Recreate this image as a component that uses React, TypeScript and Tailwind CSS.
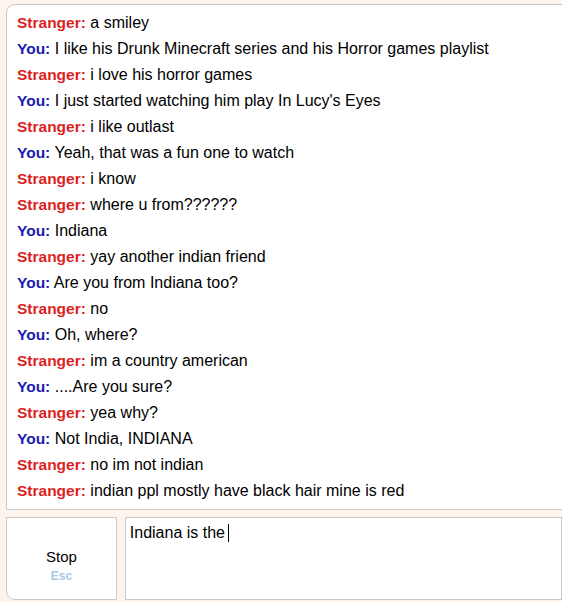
const lines: [boolean, string][] = [
  [false, 'a smiley'],
  [true, 'I like his Drunk Minecraft series and his Horror games playlist'],
  [false, 'i love his horror games'],
  [true, "I just started watching him play In Lucy's Eyes"],
  [false, 'i like outlast'],
  [true, 'Yeah, that was a fun one to watch'],
  [false, 'i know'],
  [false, 'where u from??????'],
  [true, 'Indiana'],
  [false, 'yay another indian friend'],
  [true, 'Are you from Indiana too?'],
  [false, 'no'],
  [true, 'Oh, where?'],
  [false, 'im a country american'],
  [true, '....Are you sure?'],
  [false, 'yea why?'],
  [true, 'Not India, INDIANA'],
  [false, 'no im not indian'],
  [false, 'indian ppl mostly have black hair mine is red'],
];

export default function App() {
  return (
    <div className="w-[562px] h-[602px] overflow-hidden bg-[#fdf4ee] pl-[6px] pt-[4px] font-['Liberation_Sans',Arial,sans-serif] text-[16px] text-black">
      <div className="w-[570px] h-[506px] bg-white border border-[#ccc9c4] rounded-tl-[9px] pl-[10px] pt-[5px]">
        {lines.map(([you, text], i) => (
          <div key={i} className="leading-[26px] whitespace-nowrap">
            <span className={you ? 'font-bold text-[15.5px] text-[#1c1cb0]' : 'font-bold text-[15.5px] text-[#dc1f1f]'}>
              {you ? 'You:' : 'Stranger:'}
            </span>{' '}
            {text}
          </div>
        ))}
      </div>
      <div className="flex gap-[8px] mt-[7px]">
        <div className="w-[114px] h-[83px] bg-white border border-[#ccc9c4] rounded-bl-[9px] flex flex-col items-center justify-center pt-[14px]">
          <div className="text-[15px] leading-[20px]">Stop</div>
          <div className="text-[12px] font-bold leading-[16px] mt-[1px] text-[#aac8e6]">Esc</div>
        </div>
        <div className="w-[450px] h-[83px] bg-white border border-[#ccc9c4] pl-[4px] pt-[5px]">
          <div className="leading-[20px] flex items-center">
            Indiana is the<span className="inline-block w-px h-[18px] bg-black ml-[3px]" />
          </div>
        </div>
      </div>
    </div>
  );
}
